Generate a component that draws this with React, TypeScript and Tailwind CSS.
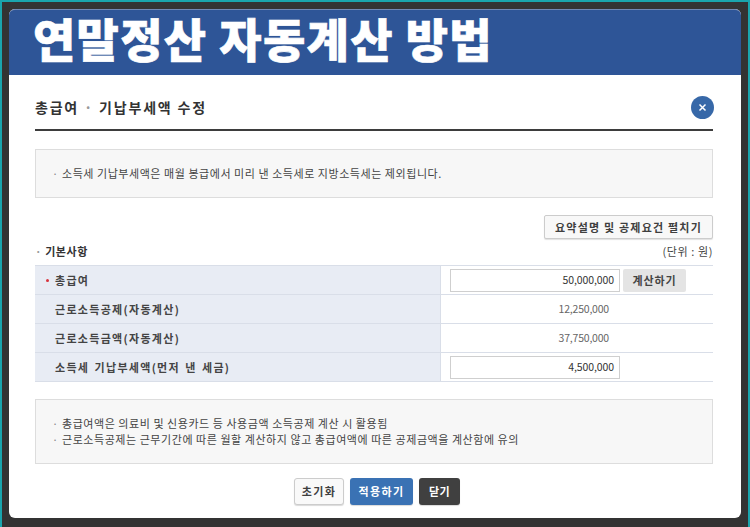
const FONT = "font-['Noto_Sans_CJK_KR','Noto_Sans',sans-serif]";

function Row({
  label,
  required,
  children
}: {
  label: string;
  required?: boolean;
  children: React.ReactNode;
}) {
  return (
    <div className="flex h-[29px] border-b border-[#d9dee8]">
      <div className="flex w-[406px] shrink-0 items-center border-r border-[#d9dee8] bg-[#e8ecf4] text-[11px] font-semibold tracking-[1.3px] text-[#444444] [word-spacing:1.5px]">
        <span className="flex w-[20px] justify-end pr-[6px]">
          {required ? <span className="h-[3px] w-[3px] rounded-full bg-[#d8323c]" /> : null}
        </span>
        <span>{label}</span>
      </div>
      <div className="flex flex-1 items-center pl-[9px]">{children}</div>
    </div>
  );
}

function Amount({ value }: { value: string }) {
  return <div className="w-[159px] text-right text-[10.5px] tracking-[-0.2px] text-[#666666]">{value}</div>;
}

function AmountInput({ value }: { value: string }) {
  return (
    <div className="flex h-[23px] w-[170px] items-center justify-end border border-[#cfcfcf] bg-white pr-[5px] text-[10.5px] tracking-[-0.1px] text-[#333333]">
      {value}
    </div>
  );
}

function Note({ children }: { children: React.ReactNode }) {
  return (
    <div className="flex items-center">
      <span className="w-[10px] shrink-0 text-[#888888]">·</span>
      {children}
    </div>
  );
}

export default function App() {
  return (
    <div className={`h-[527px] w-[750px] overflow-hidden border-x-[2px] border-t-[2px] border-[#1aa5ad] bg-[#333333] ${FONT}`}>
      <div className="ml-[7px] mt-[7px] h-[509px] w-[732px] rounded-[6px] bg-white">
        <header className="flex h-[66px] items-center rounded-t-[6px] border-t border-[#6f87b5] bg-[#2e5597] pb-[11px] pl-[24px]">
          <h1 className="text-[46px] font-black leading-[50px] tracking-[1.3px] text-white [-webkit-text-stroke:0.6px_white]">
            연말정산 자동계산 방법
          </h1>
        </header>

        <div className="pl-[26px] pr-[28px]">
          <div className="flex h-[56px] items-center justify-between border-b-2 border-[#3d3d3d] pt-[10px]">
            <h2 className="text-[14px] font-semibold tracking-[1.8px] text-[#333333]">
              총급여 <span className="text-[#999999]">·</span> 기납부세액 수정
            </h2>
            <span className="mr-[-1px] flex h-[23px] w-[23px] items-center justify-center rounded-full bg-[#3768a8] text-white">
              <svg width="9" height="9" viewBox="0 0 9 9" fill="none" stroke="currentColor" strokeWidth="1.5">
                <path d="M1.5 1.5l6 6M7.5 1.5l-6 6" />
              </svg>
            </span>
          </div>

          <div className="mt-[18px] flex h-[49px] items-center border border-[#dddddd] bg-[#f7f7f7] pl-[16px] text-[11px] tracking-[0.55px] text-[#444444]">
            <Note>소득세 기납부세액은 매월 봉급에서 미리 낸 소득세로 지방소득세는 제외됩니다.</Note>
          </div>

          <div className="mt-[17px] flex justify-end">
            <button
              type="button"
              className="h-[24px] w-[169px] rounded-[2px] border border-[#cccccc] bg-[#f8f8f8] text-[11px] font-semibold tracking-[1.2px] text-[#3f3f3f] shadow-[0_1px_1px_rgba(0,0,0,0.12)]"
            >
              요약설명 및 공제요건 펼치기
            </button>
          </div>

          <div className="flex h-[26px] items-center justify-between pb-[2px]">
            <div className="flex items-center text-[11px] font-semibold tracking-[0.6px] text-[#333333]">
              <span className="mr-[3px] text-[#999999]">·</span>기본사항
            </div>
            <div className="text-[11px] tracking-[0.6px] text-[#444444]">(단위 : 원)</div>
          </div>

          <div className="border-t border-[#d9dee8]">
            <Row label="총급여" required>
              <AmountInput value="50,000,000" />
              <button
                type="button"
                className="ml-[3px] h-[23px] w-[63px] rounded-[2px] bg-[#e4e4e4] text-[11px] font-semibold tracking-[0.9px] text-[#444444]"
              >
                계산하기
              </button>
            </Row>
            <Row label="근로소득공제(자동계산)">
              <Amount value="12,250,000" />
            </Row>
            <Row label="근로소득금액(자동계산)">
              <Amount value="37,750,000" />
            </Row>
            <Row label="소득세 기납부세액(먼저 낸 세금)">
              <AmountInput value="4,500,000" />
            </Row>
          </div>

          <div className="mt-[17px] flex h-[65px] flex-col justify-center gap-[1px] border border-[#dddddd] bg-[#f7f7f7] pl-[16px] text-[11px] leading-[15px] tracking-[0.55px] text-[#444444]">
            <Note>총급여액은 의료비 및 신용카드 등 사용금액 소득공제 계산 시 활용됨</Note>
            <Note>근로소득공제는 근무기간에 따른 월할 계산하지 않고 총급여액에 따른 공제금액을 계산함에 유의</Note>
          </div>

          <div className="mt-[14px] flex justify-center gap-[6px] pl-[6px]">
            <button
              type="button"
              className="h-[27px] w-[50px] rounded-[3px] border border-[#cccccc] bg-[#f9f9f9] text-[11px] font-semibold tracking-[1.4px] text-[#3f3f3f] shadow-[0_1px_1px_rgba(0,0,0,0.15)]"
            >
              초기화
            </button>
            <button
              type="button"
              className="h-[27px] w-[63px] rounded-[3px] bg-[#3a72b4] text-[11px] font-semibold tracking-[1.4px] text-white shadow-[0_1px_1px_rgba(0,0,0,0.15)]"
            >
              적용하기
            </button>
            <button
              type="button"
              className="h-[27px] w-[41px] rounded-[3px] bg-[#404040] text-[11px] font-semibold tracking-[0.5px] text-white shadow-[0_1px_1px_rgba(0,0,0,0.15)]"
            >
              닫기
            </button>
          </div>
        </div>
      </div>
    </div>
  );
}
